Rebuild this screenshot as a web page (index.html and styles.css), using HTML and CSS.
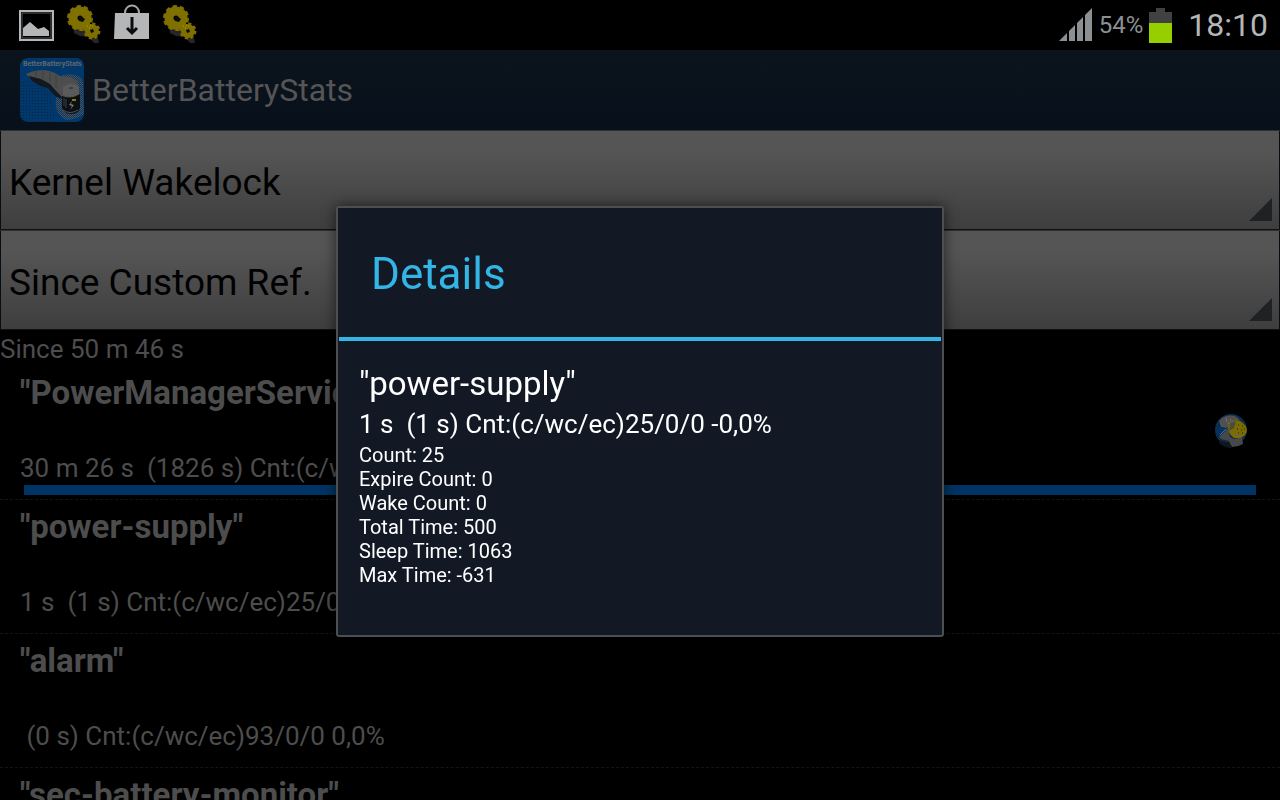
FILE: index.html
```html
<!DOCTYPE html>
<html lang="en">
<head>
  <meta charset="UTF-8">
  <meta name="viewport" content="width=device-width, initial-scale=1">
  <title>BetterBatteryStats</title>
  <link rel="stylesheet" href="styles.css">
</head>
<body>

  <!-- shared gear icon -->
  <svg class="defs" width="0" height="0" aria-hidden="true">
    <defs>
      <g id="gears">
        <path d="M7 25 L14 27 L22 33 L32 38 L33 43 L28 43 L23 37 L14 36 L8 33 Z" fill="#24262a"/>
        <circle cx="14" cy="18" r="7" fill="none" stroke="#807000" stroke-width="9"/>
        <circle cx="14" cy="18" r="11" fill="none" stroke="#807000" stroke-width="4" stroke-dasharray="4 2.9"/>
        <circle cx="26" cy="31" r="4" fill="none" stroke="#807000" stroke-width="6"/>
        <circle cx="26" cy="31" r="7" fill="none" stroke="#807000" stroke-width="3" stroke-dasharray="3 2.5"/>
        <path d="M12 17l3 -1l4 3l-2 3l-4 -1z" fill="#0c0c0c"/>
        <path d="M24 30l3 -1l1 3l-3 1z" fill="#0c0c0c"/>
        <path d="M21 26h1M24 25h1M26 26h1M23 28h1" stroke="#a3b800"/>
      </g>
    </defs>
  </svg>

  <header class="status-bar">
    <div class="notifications">
      <svg width="36" height="44" viewBox="0 0 36 44">
        <rect x="2" y="11" width="33" height="29" fill="#000" stroke="#b4b6b8" stroke-width="2"/>
        <rect x="4" y="13" width="29" height="25" fill="none" stroke="#55585a"/>
        <path d="M5 36V28L12 22L20 29L26 27L31 31V36Z" fill="#b4b6b8"/>
      </svg>
      <svg width="36" height="44" viewBox="0 0 36 44"><use href="#gears"/></svg>
      <svg width="36" height="44" viewBox="0 0 36 44">
        <path d="M11 13C11 3 25 3 25 13" fill="none" stroke="#a4a6a8" stroke-width="2"/>
        <path d="M1 13H35V39H0Z" fill="#b4b6b8"/>
        <path d="M18 17V32M13 28L18 33L23 28" fill="none" stroke="#0c0c0c" stroke-width="3"/>
      </svg>
      <svg width="36" height="44" viewBox="0 0 36 44"><use href="#gears"/></svg>
    </div>
    <div class="system">
      <svg class="signal" width="34" height="34" viewBox="0 0 34 34">
        <path d="M0 33L8 25V33Z M10 23L16 17V33H10Z M18 15L24 9V33H18Z M26 7L33 0V33H26Z" fill="#8c9093"/>
      </svg>
      <span class="percent">54%</span>
      <svg class="battery" width="23" height="35" viewBox="0 0 23 35">
        <path d="M7 0H16V4H23V15H0V4H7Z" fill="#414141"/>
        <path d="M0 15H23V35H0Z" fill="#96cf00"/>
      </svg>
      <time class="clock">18:10</time>
    </div>
  </header>

  <div class="action-bar">
    <svg class="logo" width="64" height="64" viewBox="0 0 64 64">
      <defs>
        <pattern id="dots" width="3" height="3" patternUnits="userSpaceOnUse">
          <rect x="0" y="0" width="1" height="1" fill="#0b2340"/>
        </pattern>
        <pattern id="glow" width="2" height="2" patternUnits="userSpaceOnUse">
          <rect width="1" height="1" fill="#555"/>
          <rect x="1" y="1" width="1" height="1" fill="#4a5058"/>
        </pattern>
      </defs>
      <rect width="64" height="64" rx="8" fill="#00386c"/>
      <path d="M0 22L30 32L36 64H8Q0 64 0 56Z" fill="url(#dots)"/>
      <path d="M42 17Q60 14 63 24L64 56Q56 62 46 62Q34 56 36 40Z" fill="url(#glow)"/>
      <path d="M6 16Q14 12 24 12Q33 13 40 18L50 19Q57 21 59 28V50Q57 56 51 56Q43 56 42 48V39L36 33L28 26Q16 21 8 18Z" fill="#4d4d4d"/>
      <path d="M9 18L21 21L30 26L36 33L42 39L41 41L35 38L28 30L20 28L12 23Z" fill="#12181f"/>
      <path d="M16 13V19M23 12V21M30 14V25M36 17V30" stroke="#3d4146"/>
      <path d="M42 38Q51 42 60 36V50Q58 56 51 56Q43 56 42 49Z" fill="#0b0f13"/>
      <path d="M46 41V50M44 40V48" stroke="#3c4044"/>
      <path d="M43 52Q50 57 58 52" fill="none" stroke="#555"/>
      <path d="M43 29Q51 22 59 29V36Q51 41 43 37Z" fill="#5a5a5a"/>
      <path d="M49 30H53" stroke="#222" stroke-width="1"/>
      <path d="M52 41H56V43H52Z" fill="#8a7a00"/>
      <path d="M52 43L49 47L52 48L50 52L54 47L51 46Z" fill="#777"/>
      <text class="logo-text" x="3" y="8">BetterBatteryStats</text>
    </svg>
    <h1 class="app-title">BetterBatteryStats</h1>
  </div>

  <main>
    <div class="spinners">
      <div class="spinner">
        <select aria-label="Statistic">
          <option>Kernel Wakelock</option>
        </select>
      </div>
      <div class="spinner">
        <select aria-label="Reference">
          <option>Since Custom Ref.</option>
        </select>
      </div>
    </div>

    <p class="since">Since 50 m 46 s</p>

    <ul class="stats">
      <li class="stat">
        <div class="stat-row">
          <div class="stat-text">
            <h2>"PowerManagerService"</h2>
            <p>30 m 26 s&nbsp; (1826 s) Cnt:(c/wc/ec)</p>
          </div>
          <svg class="globe" width="32" height="36" viewBox="0 0 32 36">
            <circle cx="16" cy="17" r="16" fill="#092b4d"/>
            <circle cx="16" cy="17" r="15" fill="none" stroke="#243547" stroke-dasharray="2 2"/>
            <path d="M4 8Q10 1 20 3L25 7L16 10L12 15L6 14Z" fill="#505050"/>
            <path d="M4 24L13 15L15 24L19 26L27 24L28 31Q23 34 17 34L14 28L6 26Z" fill="#484848"/>
            <path d="M2 15L8 14L12 16L5 23L2 22Z" fill="#003465"/>
            <path d="M4 27Q10 30 14 29L17 35Q9 35 4 30Z" fill="#10161d"/>
            <path d="M14 10Q18 6 25 8Q32 12 32 18Q31 23 25 25L19 25Q13 21 13 14Z" fill="#7b6c00"/>
            <path d="M15 10L21 8L19 15L14 18Z" fill="#4a4a44"/>
            <path d="M23 12h1M27 13h1M22 16h1M26 17h1M29 16h1M23 20h1M27 20h1" stroke="#221f08"/>
            <path d="M11 6h1M15 7h1M11 8h1M13 10h1" stroke="#888"/>
            <path d="M11 16L5 22M19 22L26 21" stroke="#65696c"/>
          </svg>
        </div>
        <div class="bar"></div>
      </li>
      <li class="stat">
        <div class="stat-row">
          <div class="stat-text">
            <h2>"power-supply"</h2>
            <p>1 s&nbsp; (1 s) Cnt:(c/wc/ec)25/0/0 -0,0%</p>
          </div>
        </div>
      </li>
      <li class="stat">
        <div class="stat-row">
          <div class="stat-text">
            <h2>"alarm"</h2>
            <p>&nbsp;(0 s) Cnt:(c/wc/ec)93/0/0 0,0%</p>
          </div>
        </div>
      </li>
      <li class="stat">
        <div class="stat-row">
          <div class="stat-text">
            <h2>"sec-battery-monitor"</h2>
          </div>
        </div>
      </li>
    </ul>
  </main>

  <div class="overlay">
    <section class="dialog" role="dialog" aria-labelledby="dialog-title">
      <h2 class="dialog-title" id="dialog-title">Details</h2>
      <div class="dialog-body">
        <h3>"power-supply"</h3>
        <p class="summary">1 s&nbsp; (1 s) Cnt:(c/wc/ec)25/0/0 -0,0%</p>
        <ul class="details">
          <li>Count: 25</li>
          <li>Expire Count: 0</li>
          <li>Wake Count: 0</li>
          <li>Total Time: 500</li>
          <li>Sleep Time: 1063</li>
          <li>Max Time: -631</li>
        </ul>
      </div>
    </section>
  </div>

</body>
</html>
```
FILE: styles.css
```css
* {
  box-sizing: border-box;
  margin: 0;
  padding: 0;
}

body {
  height: 100vh;
  overflow: hidden;
  background: #000;
  color: #4d4d4d;
  font-family: Roboto, sans-serif;
}

ul {
  list-style: none;
}

svg {
  display: block;
  flex-shrink: 0;
}

.defs {
  position: absolute;
}

/* status bar */
.status-bar {
  display: flex;
  justify-content: space-between;
  height: 50px;
  padding: 0 12px 0 18px;
}

.notifications {
  display: flex;
  gap: 12px;
}

.system {
  display: flex;
  align-items: center;
}

.percent {
  margin: 0 6px;
  color: #8c9093;
  font-size: 24px;
}

.clock {
  margin-left: 16px;
  color: #b4b6b8;
  font-size: 32px;
}

/* action bar */
.action-bar {
  display: flex;
  align-items: center;
  gap: 8px;
  height: 80px;
  padding: 0 20px;
  background: linear-gradient(#0b131d, #08101b);
}

.logo-text {
  fill: #666;
  font-size: 7px;
  font-weight: bold;
}

.app-title {
  color: #555;
  font-size: 32px;
  font-weight: normal;
  line-height: 40px;
}

/* spinners */
.spinners {
  background: #070d15;
}

.spinner {
  position: relative;
  padding: 0 1px;
  border-top: 1px solid #303030;
  border-bottom: 1px solid #101010;
}

.spinner select {
  display: block;
  width: 100%;
  height: 98px;
  padding: 4px 8px 0;
  border: none;
  border-radius: 0;
  appearance: none;
  background: linear-gradient(#555 20%, #3e3e3e);
  color: #000;
  font-family: inherit;
  font-size: 37px;
}

.spinner::after {
  content: "";
  position: absolute;
  right: 8px;
  bottom: 8px;
  border-left: 23px solid transparent;
  border-bottom: 23px solid #1f2123;
  pointer-events: none;
}

/* list */
.since {
  height: 36px;
  font-size: 26px;
  line-height: 38px;
}

.stat {
  height: 134px;
  padding: 7px 20px 0;
  border-bottom: 1px dashed #141414;
}

.stat-row {
  display: flex;
  justify-content: space-between;
}

.stat h2 {
  font-size: 33px;
  line-height: 40px;
}

.stat p {
  margin-top: 36px;
  font-size: 26px;
  line-height: 38px;
}

.globe {
  margin: 40px 13px 0 0;
}

.bar {
  height: 10px;
  margin: -2px 4px 0;
  background: #003465;
}

/* dialog */
.overlay {
  position: fixed;
  inset: 50px 0 0;
  display: flex;
  align-items: center;
  justify-content: center;
  padding-bottom: 8px;
}

.dialog {
  width: 608px;
  max-width: 100%;
  border: 2px solid #4c4e50;
  border-radius: 3px;
  background: #121925;
  box-shadow: 0 0 14px rgba(0, 0, 0, 0.6);
}

.dialog-title {
  margin: 0 1px;
  padding: 3px 32px 0;
  border-bottom: 4px solid #33b5e5;
  color: #33b5e5;
  font-size: 44px;
  font-weight: normal;
  line-height: 126px;
}

.dialog-body {
  padding: 22px 21px 48px;
  color: #fff;
}

.dialog-body h3 {
  font-size: 33px;
  font-weight: normal;
  line-height: 42px;
}

.summary {
  font-size: 26px;
  line-height: 38px;
}

.details {
  font-size: 20px;
  line-height: 24px;
}
```
